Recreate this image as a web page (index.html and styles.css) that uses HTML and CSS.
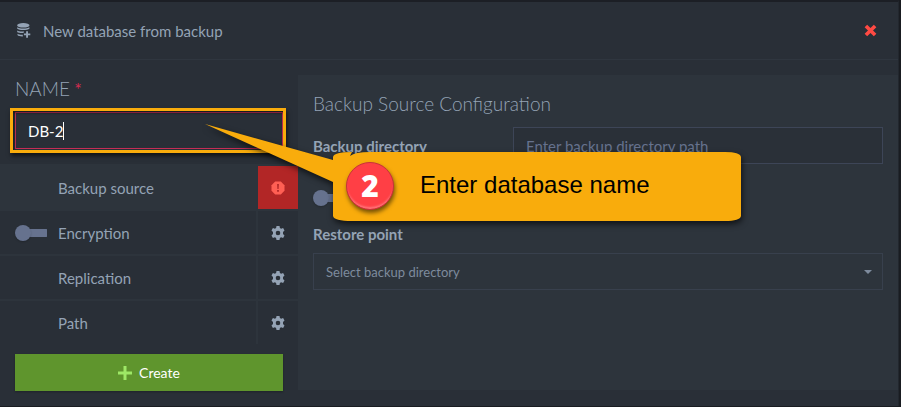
FILE: index.html
```html
<!DOCTYPE html>
<html lang="en">
<head>
<meta charset="utf-8">
<title>New database from backup</title>
<link rel="stylesheet" href="styles.css">
</head>
<body>
<svg class="defs" width="0" height="0" aria-hidden="true">
  <symbol id="gear" viewBox="0 0 14 14">
    <path fill-rule="evenodd" d="M5.5 0h3l.4 2 1.2.7 2-.7 1.4 2.5-1.5 1.4v2.2l1.5 1.4-1.4 2.5-2-.7-1.2.7-.4 2h-3l-.4-2-1.2-.7-2 .7L.5 9.500 2 8.100V5.900L.5 4.500 1.900 2l2 .7 1.200-.7zM7 4.700a2.300 2.300 0 1 0 0 4.600a2.300 2.300 0 0 0 0-4.600z"/>
  </symbol>
</svg>
<main class="dialog">
  <header class="header">
    <svg class="db-icon" viewBox="0 0 14 15">
      <ellipse cx="6.300" cy="2.300" rx="6.200" ry="2.300"/>
      <path d="M.2 4.200c2.200 1.700 10 1.700 12.200 0v1.500c-1.500 1.500-10 2.100-12.200 0zM.2 7.500c1.500 1.100 4.500 1.200 7 .9L6.400 10C4 10.200 1.200 10 .2 9zM.5 10.800c1.300.8 3.300 1 5.300.9v1.800c-2.200.1-4.700-.3-5.300-1.400zM9.100 8.200h1.900v2.200h2.300v1.900H11v2.500H9.100v-2.500H6.900v-1.900h2.200z"/>
    </svg>
    <h1 class="title">New database from backup</h1>
    <svg class="close" viewBox="0 0 13 13"><path d="M1.900 1.900l9.200 9.200M11.100 1.900l-9.200 9.200"/></svg>
  </header>
  <div class="body">
    <aside class="sidebar">
      <div class="name-block">
        <div class="name-label">NAME <span class="required">*</span></div>
        <div class="name-input">DB-2<span class="caret"></span><span class="highlight"></span></div>
      </div>
      <nav class="steps">
        <div class="step active"><div class="step-main">Backup source</div><div class="step-side error">
          <svg class="alert" viewBox="0 0 14 14"><path class="alert-shape" d="M4.200.5h5.600l3.700 3.700v5.600l-3.700 3.700H4.200L.5 9.800V4.200z"/><path class="alert-mark" d="M6.100 3h1.800l-.3 5H6.400zM6.100 9h1.800v1.800H6.100z"/></svg>
        </div></div>
        <div class="step"><div class="step-main"><span class="toggle"></span>Encryption</div><div class="step-side"><svg class="gear"><use href="#gear"/></svg></div></div>
        <div class="step"><div class="step-main">Replication</div><div class="step-side"><svg class="gear"><use href="#gear"/></svg></div></div>
        <div class="step"><div class="step-main">Path</div><div class="step-side"><svg class="gear"><use href="#gear"/></svg></div></div>
      </nav>
      <div class="create"><svg class="plus" viewBox="0 0 14 14"><path d="M7 0v14M0 7h14"/></svg>Create</div>
    </aside>
    <section class="panel">
      <h2 class="panel-title">Backup Source Configuration</h2>
      <div class="field"><div class="label">Backup directory</div><div class="input">Enter backup directory path</div></div>
      <div class="option"><span class="toggle"></span></div>
      <div class="label restore">Restore point</div>
      <div class="select">Select backup directory<span class="arrow"></span></div>
    </section>
  </div>
</main>
<div class="callout">
  <svg class="callout-shape" viewBox="0 0 550 110">
    <path d="M145 32Q150 28 165 28H520Q535 28 536 33V92Q535 97 520 97H147Q129 97 128 92V58L0 0L128 36V33Q129 28 147 28z"/>
  </svg>
  <span class="badge">2</span>
  <span class="callout-text">Enter database name</span>
</div>
</body>
</html>
```
FILE: styles.css
```css
* { box-sizing: border-box; }
body {
  margin: 0;
  width: 901px;
  height: 407px;
  overflow: hidden;
  background: #191c21;
  font: 15px/20px Lato, sans-serif;
  color: #94a3b5;
}
.defs { position: absolute; }
.dialog {
  width: 899px;
  height: 406px;
  border-top: 2px solid #1c1f25;
  border-right: 1px solid #22272e;
  background: #292f37;
}
.header {
  display: flex;
  align-items: center;
  height: 58px;
  padding: 0 21px 0 17px;
  border-bottom: 1px solid #2f363f;
}
.db-icon { width: 14px; height: 15px; fill: #94a3b5; }
.title { margin: 0 auto 0 12px; font-size: 15px; font-weight: 400; }
.close { width: 13px; height: 13px; fill: none; stroke: #ff4a43; stroke-width: 3.6; }
.body { display: flex; }
.sidebar { width: 298px; }
.name-block { height: 104px; padding: 18px 15px 0; }
.name-label { height: 34px; font-size: 19px; font-weight: 300; line-height: 21px; }
.required { margin-left: -1px; color: #d22c50; font-size: 18px; font-weight: 400; }
.name-input {
  position: relative;
  display: flex;
  align-items: center;
  height: 37px;
  padding-left: 12px;
  border: 1px solid #c52d55;
  color: #fff;
}
.caret { width: 1px; height: 18px; background: #fff; }
.highlight {
  position: absolute;
  inset: -5px -4px -5px -6px;
  border: 3px solid #f9ac0c;
  box-shadow: 1px 3px 4px #0009, inset 1px 2px 3px #0007;
}
.steps { border-top: 2px solid #2d343c; }
.step { display: flex; height: 45px; border-bottom: 2px solid #2d343c; }
.step:last-child { height: 43px; border-bottom: 0; }
.step-main {
  display: flex;
  align-items: center;
  position: relative;
  width: 258px;
  padding-left: 58px;
  border-right: 2px solid #2d343c;
}
.step-main .toggle { position: absolute; left: 15px; }
.active .step-main { background: #2d343c; }
.step-side { flex: 1; display: grid; place-items: center; }
.error { background: #b22626; }
.alert { width: 14px; height: 14px; }
.alert-shape { fill: #ff5f54; }
.alert-mark { fill: #b22626; }
.gear { width: 14px; height: 14px; fill: #94a3b5; }
.toggle {
  display: flex;
  align-items: center;
  width: 32px;
  height: 16px;
  background: linear-gradient(#66728e, #66728e) 8px 4px / 24px 8px no-repeat;
  border-radius: 0 5px 5px 0;
}
.toggle::before {
  content: "";
  width: 16px;
  height: 16px;
  border-radius: 50%;
  background: #66728e;
  box-shadow: 0 1px 2px #0003;
}
.create {
  display: flex;
  align-items: center;
  justify-content: center;
  gap: 7px;
  width: 268px;
  height: 37px;
  margin: 10px 15px 0;
  background: #5f952d;
  box-shadow: 0 1px 2px #0004;
  color: #fff;
  font-size: 14px;
}
.plus { width: 14px; height: 14px; stroke: #9ee866; stroke-width: 3; }
.panel { width: 600px; height: 315px; margin-top: 15px; padding: 16px 15px 0; background: #2d343c; }
.panel-title { margin: 0 0 11px; font-size: 19px; font-weight: 300; line-height: 25px; }
.field { display: flex; align-items: center; height: 37px; }
.label { width: 200px; font-weight: 700; }
.input {
  flex: 1;
  height: 37px;
  padding: 8px 12px;
  border: 1px solid #3d4557;
  background: #2a3038;
  color: #66728e;
}
.option { height: 60px; padding-top: 26px; }
.restore { margin-bottom: 9px; }
.select {
  display: flex;
  align-items: center;
  justify-content: space-between;
  height: 37px;
  padding: 0 10px 0 12px;
  border: 1px solid #38404d;
  color: #7e8b9d;
  font-size: 13px;
}
.arrow { border: 4px solid transparent; border-top-color: #7e8b9d; border-bottom: 0; }
.callout { position: absolute; left: 205px; top: 124px; width: 550px; height: 110px; }
.callout-shape {
  display: block;
  width: 550px;
  height: 110px;
  overflow: visible;
  fill: #f9ac0c;
  filter: drop-shadow(1px 3px 3px #000a);
}
.badge {
  position: absolute;
  left: 141px;
  top: 38px;
  width: 48px;
  height: 48px;
  border: 1px solid #c8323a;
  border-radius: 50%;
  background: #ff3f45;
  box-shadow: 1px 3px 4px #0008, inset 0 -3px 2px -1px #ff7379;
  color: #fff;
  font: 800 30px/46px "Open Sans", sans-serif;
  text-align: center;
}
.callout-text {
  position: absolute;
  left: 215px;
  top: 47px;
  color: #000;
  font: 24px/28px "Liberation Sans", sans-serif;
  white-space: nowrap;
}
```
